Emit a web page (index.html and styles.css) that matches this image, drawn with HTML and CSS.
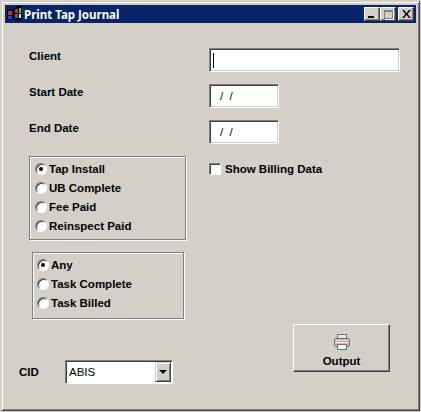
FILE: index.html
```html
<!DOCTYPE html>
<html>
<head>
<meta charset="utf-8">
<title>Print Tap Journal</title>
<link rel="stylesheet" href="styles.css">
</head>
<body>
<div class="window">
  <div class="titlebar">
    <svg class="app-icon" width="17" height="16" viewBox="0 0 17 16">
      <path d="M1 4 L8 3 L11 0 H16 V13 L11 15 L8 13 L1 14Z" fill="#000"/>
      <rect x="2" y="5" width="4" height="4" fill="#d22"/>
      <rect x="2" y="10" width="4" height="3" fill="#24d"/>
      <rect x="9" y="3" width="3" height="4" fill="#e22"/>
      <rect x="13" y="2" width="2" height="5" fill="#2d2"/>
      <rect x="9" y="8" width="3" height="4" fill="#26e"/>
      <rect x="13" y="8" width="2" height="4" fill="#ee2"/>
    </svg>
    <span class="title">Print Tap Journal</span>
    <div class="caption-buttons">
      <button class="cap"><span class="glyph-min"></span></button>
      <button class="cap"><span class="glyph-max"></span></button>
      <button class="cap cap-close">
        <svg width="9" height="8" viewBox="0 0 9 8"><path d="M0 0h2l2.500 3L7 0h2L5.500 4 9 8H7L4.500 5 2 8H0l3.500-4z" fill="#000"/></svg>
      </button>
    </div>
  </div>
  <div class="form">
    <div class="fields">
      <div class="field-row"><label class="label">Client</label><div class="input input-wide"><span class="caret"></span></div></div>
      <div class="field-row"><label class="label">Start Date</label><div class="input input-date">/ /</div></div>
      <div class="field-row"><label class="label">End Date</label><div class="input input-date">/ /</div></div>
    </div>
    <div class="middle">
      <div class="groups">
        <div class="group group-a">
          <div class="radio-row"><span class="radio on"></span>Tap Install</div>
          <div class="radio-row"><span class="radio"></span>UB Complete</div>
          <div class="radio-row"><span class="radio"></span>Fee Paid</div>
          <div class="radio-row"><span class="radio"></span>Reinspect Paid</div>
        </div>
        <div class="group group-b">
          <div class="radio-row"><span class="radio on"></span>Any</div>
          <div class="radio-row"><span class="radio"></span>Task Complete</div>
          <div class="radio-row"><span class="radio"></span>Task Billed</div>
        </div>
      </div>
      <div class="check-row"><span class="check"></span>Show Billing Data</div>
    </div>
    <div class="bottom">
      <div class="cid">
        <label class="label cid-label">CID</label>
        <div class="combo"><span class="combo-text">ABIS</span><span class="combo-btn"><span class="arrow"></span></span></div>
      </div>
      <button class="output">
        <svg width="16" height="16" viewBox="0 0 16 16">
          <rect x="3.500" y="0.500" width="9" height="5" fill="#e8e8e8" stroke="#707070"/>
          <rect x="0.500" y="4.500" width="15" height="8" rx="1.500" fill="#c0c0c4" stroke="#707070"/>
          <rect x="1" y="6" width="14" height="1" fill="#f6d8d8"/>
          <rect x="1" y="7" width="14" height="1" fill="#f08c8c"/>
          <rect x="1" y="8" width="14" height="1" fill="#f4f4f4"/>
          <rect x="12" y="6" width="2" height="1" fill="#e8d040"/>
          <rect x="3.500" y="10.500" width="9" height="5" fill="#f4f4f4" stroke="#707070"/>
        </svg>
        <span>Output</span>
      </button>
    </div>
  </div>
</div>
</body>
</html>
```
FILE: styles.css
```css
* { box-sizing: border-box; }
html, body { margin: 0; padding: 0; background: #d4d0c8; }
body { font-family: "Liberation Sans", Arial, sans-serif; font-size: 11.500px; font-weight: bold; color: #000; padding: 1px; }
.window {
  width: 419px; height: 410px; padding: 3px;
  border: 1px solid; border-color: #d4d0c8 #404040 #404040 #d4d0c8;
  box-shadow: inset 1px 1px 0 #fff, inset -1px -1px 0 #808080;
  background: #d4d0c8; overflow: hidden;
}
.titlebar { height: 18px; background: #0a246a; color: #fff; display: flex; align-items: center; padding: 0 2px 0 1px; }
.app-icon { flex: none; }
.title { margin-left: 1px; font-family: "Noto Sans", sans-serif; font-size: 11.500px; }
.caption-buttons { margin-left: auto; display: flex; }
.cap {
  width: 16px; height: 14px; padding: 0; background: #d4d0c8; border: 1px solid;
  border-color: #fff #404040 #404040 #fff; box-shadow: inset -1px -1px 0 #808080;
  display: flex; align-items: center; justify-content: center;
}
.cap-close { margin-left: 2px; }
.glyph-min { width: 6px; height: 2px; background: #000; margin-top: 6px; margin-right: 2px; }
.glyph-max { width: 9px; height: 9px; border: 1px solid #808080; border-top-width: 2px; box-shadow: 1px 1px 0 #fff; }
.fields { padding: 25px 16px 0 24px; display: flex; flex-direction: column; gap: 12px; }
.field-row { display: flex; height: 24px; }
.label { width: 180px; flex: none; line-height: 15px; padding-top: 1px; }
.input {
  height: 24px; background: #fff; border: 1px solid; border-color: #808080 #fff #fff #808080;
  box-shadow: inset 1px 1px 0 #404040, inset -1px -1px 0 #d4d0c8;
  font-weight: normal; line-height: 22px; padding-left: 10px;
}
.input-wide { width: 192px; padding-left: 3px; display: flex; align-items: center; }
.caret { width: 1px; height: 15px; background: #000; }
.input-date { width: 70px; word-spacing: 3px; }
.middle { display: flex; padding-left: 24px; margin-top: 12px; }
.groups { width: 180px; flex: none; }
.group { border: 1px solid #808080; box-shadow: 1px 1px 0 #fff, inset 1px 1px 0 #fff; }
.group-a { width: 157px; height: 84px; padding: 2px 0 0 5px; }
.group-b { width: 152px; height: 67px; margin: 12px 0 0 3px; padding: 2px 0 0 4px; }
.radio-row { display: flex; align-items: center; height: 19px; }
.radio {
  width: 12px; height: 12px; border-radius: 50%; background: #fff; flex: none; margin-right: 2px;
  border: 1px solid; border-color: #808080 #fff #fff #808080; box-shadow: inset 1px 1px 0 #404040;
  position: relative;
}
.radio.on::after { content: ""; position: absolute; left: 3px; top: 3px; width: 4px; height: 4px; border-radius: 50%; background: #000; }
.check-row { display: flex; align-items: center; height: 14px; margin-top: 6px; }
.check {
  width: 12px; height: 12px; background: #fff; margin-right: 4px; flex: none;
  border: 1px solid; border-color: #808080 #fff #fff #808080; box-shadow: inset 1px 1px 0 #404040;
}
.bottom { display: flex; justify-content: space-between; align-items: flex-start; padding: 5px 26px 0 14px; }
.cid { display: flex; margin-top: 36px; }
.cid-label { width: 46px; line-height: 24px; padding-top: 0; }
.combo {
  width: 108px; height: 24px; background: #fff; display: flex; border: 1px solid;
  border-color: #808080 #fff #fff #808080; box-shadow: inset 1px 1px 0 #404040; padding: 1px 1px 1px 3px;
}
.combo-text { flex: 1; font-weight: normal; line-height: 21px; }
.combo-btn {
  width: 16px; background: #d4d0c8; border: 1px solid; border-color: #d4d0c8 #404040 #404040 #d4d0c8;
  box-shadow: inset 1px 1px 0 #fff, inset -1px -1px 0 #808080; display: flex; align-items: center; justify-content: center;
}
.arrow { width: 0; height: 0; border: 4px solid transparent; border-top-color: #000; border-bottom-width: 0; }
.output {
  width: 97px; height: 48px; padding: 9px 0 0; background: #d4d0c8; border: 1px solid;
  border-color: #fff #404040 #404040 #fff; box-shadow: inset -1px -1px 0 #808080;
  font: inherit; color: #000; display: flex; flex-direction: column; align-items: center; gap: 5px;
}
```
